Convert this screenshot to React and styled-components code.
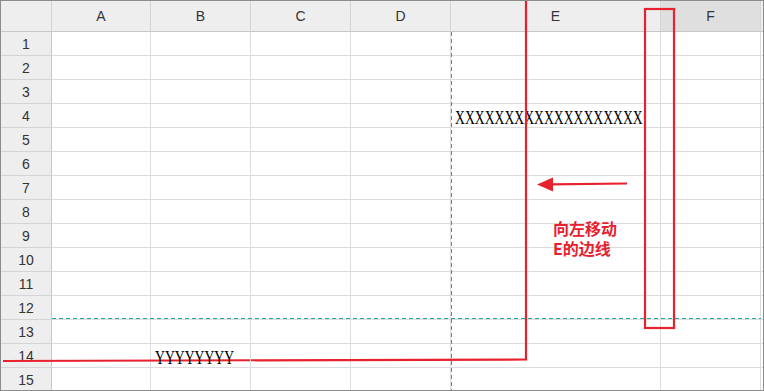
import React from "react";
import styled, { createGlobalStyle } from "styled-components";

const GlobalStyle = createGlobalStyle`
  html, body { margin: 0; padding: 0; background: #fff; }
  body { font-family: "Liberation Sans", Arial, sans-serif; }
`;

const columns = [
  { label: "A", width: 99 },
  { label: "B", width: 100 },
  { label: "C", width: 100 },
  { label: "D", width: 100 },
  { label: "E", width: 210 },
  { label: "F", width: 100, active: true },
];

const cellText = {
  "4-E": "XXXXXXXXXXXXXXXXXXX",
  "14-B": "YYYYYYYY",
};

const Frame = styled.div`
  position: relative;
  width: 764px;
  height: 391px;
  box-sizing: border-box;
  border: 1px solid #8c8c8c;
  overflow: hidden;
  background: #fff;
`;

const Sheet = styled.div`
  display: grid;
  grid-template-columns: 51px ${columns.map((c) => c.width + "px").join(" ")} 1fr;
  grid-template-rows: 31px repeat(15, 24px);
`;

const HeadCell = styled.div`
  box-sizing: border-box;
  background: ${(p) => (p.$active ? "#dfdfdf" : "#eeeeee")};
  border-right: 1px solid #d4d4d4;
  border-bottom: 1px solid #c8c8c8;
  display: flex;
  align-items: center;
  justify-content: center;
  font-size: 14px;
  color: #333;
`;

const RowHead = styled.div`
  box-sizing: border-box;
  background: #eeeeee;
  border-right: 1px solid #c8c8c8;
  border-bottom: 1px solid #d4d4d4;
  display: flex;
  align-items: center;
  justify-content: center;
  font-size: 14px;
  color: #333;
`;

const Cell = styled.div`
  box-sizing: border-box;
  border-right: 1px solid #dcdcdc;
  border-bottom: 1px solid #dcdcdc;
  padding-left: 4px;
  overflow: visible;
  white-space: nowrap;
  position: relative;
  z-index: ${(p) => (p.$onTop ? 2 : "auto")};
`;

const Overflow = styled.span`
  display: inline-block;
  font-family: "Liberation Serif", "Times New Roman", serif;
  font-size: 19px;
  line-height: 24px;
  color: #000;
  transform: translateY(2px) scaleX(0.72);
  transform-origin: left center;
`;

const Overlay = styled.svg`
  position: absolute;
  left: -1px;
  top: -1px;
  z-index: 1;
  pointer-events: none;
`;

const Note = styled.div`
  position: absolute;
  left: 552px;
  top: 217px;
  z-index: 1;
  font-family: "Noto Sans CJK SC", "Noto Sans", sans-serif;
  font-weight: 700;
  font-size: 16px;
  line-height: 20px;
  color: #e8212e;
`;

const RED = "#e8212e";
const TEAL = "#1aa99a";

export default function App() {
  const rows = Array.from({ length: 15 }, (_, i) => i + 1);
  return (
    <>
      <GlobalStyle />
      <Frame>
        <Sheet>
          <HeadCell />
          {columns.map((c) => (
            <HeadCell key={c.label} $active={c.active}>
              {c.label}
            </HeadCell>
          ))}
          <HeadCell />
          {rows.map((r) => (
            <React.Fragment key={r}>
              <RowHead>{r}</RowHead>
              {columns.map((c) => {
                const t = cellText[`${r}-${c.label}`];
                // the Y row is drawn above the annotation line, the X row under it
                return (
                  <Cell key={c.label} $onTop={t && r === 14}>
                    {t && <Overflow>{t}</Overflow>}
                  </Cell>
                );
              })}
              <Cell />
            </React.Fragment>
          ))}
        </Sheet>

        <Overlay width="764" height="391" viewBox="0 0 764 391">
          <line x1="451.5" y1="32" x2="451.5" y2="391" stroke={TEAL} strokeWidth="1" strokeDasharray="4 3" />
          <line x1="52" y1="318.5" x2="761" y2="318.5" stroke={TEAL} strokeWidth="1" strokeDasharray="4 3" />
          <polyline points="3,361 526,359.5 526,0" fill="none" stroke={RED} strokeWidth="2.2" />
          <rect x="645" y="9" width="29" height="319" fill="none" stroke={RED} strokeWidth="2.2" />
          <line x1="627" y1="183.5" x2="550" y2="184.3" stroke={RED} strokeWidth="2.2" />
          <polygon points="537,184.5 553,177.5 553,191.5" fill={RED} />
        </Overlay>
        <Note>
          向左移动
          <br />
          E的边线
        </Note>
      </Frame>
    </>
  );
}
